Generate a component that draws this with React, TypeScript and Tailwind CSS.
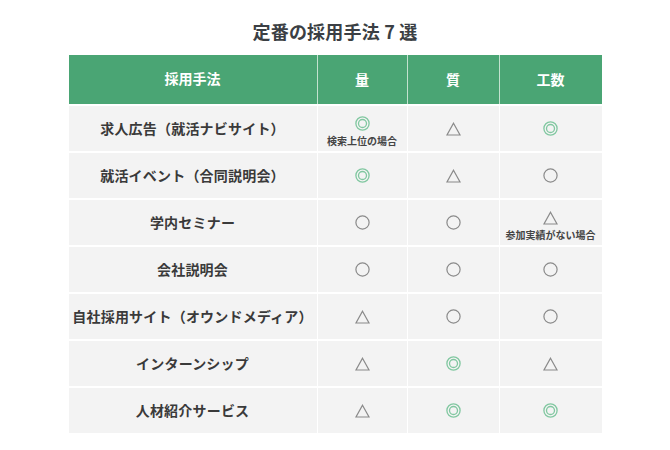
import React from "react";

type Mark = "double" | "circle" | "tri";
type Cell = { m: Mark; note?: string };
const rows: { name: string; cells: Cell[] }[] = [
  { name: "求人広告（就活ナビサイト）", cells: [{ m: "double", note: "検索上位の場合" }, { m: "tri" }, { m: "double" }] },
  { name: "就活イベント（合同説明会）", cells: [{ m: "double" }, { m: "tri" }, { m: "circle" }] },
  { name: "学内セミナー", cells: [{ m: "circle" }, { m: "circle" }, { m: "tri", note: "参加実績がない場合" }] },
  { name: "会社説明会", cells: [{ m: "circle" }, { m: "circle" }, { m: "circle" }] },
  { name: "自社採用サイト（オウンドメディア）", cells: [{ m: "tri" }, { m: "circle" }, { m: "circle" }] },
  { name: "インターンシップ", cells: [{ m: "tri" }, { m: "double" }, { m: "tri" }] },
  { name: "人材紹介サービス", cells: [{ m: "tri" }, { m: "double" }, { m: "double" }] },
];

const widths = ["w-[89px]", "w-[91px]", "w-[102px]"];

function Symbol({ m }: { m: Mark }) {
  if (m === "double")
    return (
      <svg width="15" height="15" viewBox="0 0 15 15" fill="none" stroke="#80c7a0" strokeWidth="1.3">
        <circle cx="7.5" cy="7.5" r="6.6" />
        <circle cx="7.5" cy="7.5" r="4" />
      </svg>
    );
  if (m === "circle")
    return (
      <svg width="15" height="15" viewBox="0 0 15 15" fill="none" stroke="#8a8a8a" strokeWidth="1.2">
        <circle cx="7.5" cy="7.5" r="6.6" />
      </svg>
    );
  return (
    <svg width="15" height="14" viewBox="0 0 15 14" fill="none" stroke="#8a8a8a" strokeWidth="1.2" strokeLinejoin="miter">
      <path d="M7.5 1.2 L14 13 L1 13 Z" />
    </svg>
  );
}

function MarkCell({ c, w }: { c: Cell; w: string }) {
  return (
    <div
      className={`${w} bg-[#f3f3f3] flex flex-col items-center justify-center ${c.note ? "pt-[6px]" : ""}`}
    >
      <Symbol m={c.m} />
      {c.note && (
        <span className="text-[10px] leading-[12px] font-bold text-[#444] mt-[4px] whitespace-nowrap">{c.note}</span>
      )}
    </div>
  );
}

export default function App() {
  return (
    <div
      className="w-[670px] h-[450px] bg-white"
      style={{ fontFamily: '"Noto Sans CJK JP", "Noto Sans", sans-serif' }}
    >
      <div className="pt-[17px] h-[55px] text-center">
        <h1 className="text-[18px] leading-[28px] font-bold text-[#3b3f44] tracking-[0.2px]">定番の採用手法 7 選</h1>
      </div>
      <div className="w-[533px] mx-auto flex flex-col gap-[2px] bg-white">
        <div className="flex h-[49px] bg-[#c3e2cf] gap-px">
          <div className="w-[248px] bg-[#4aa574] flex items-center justify-center text-white text-[14px] font-bold pb-[2px]">
            採用手法
          </div>
          {["量", "質", "工数"].map((h, i) => (
            <div
              key={h}
              className={`${widths[i]} bg-[#4aa574] flex items-center justify-center text-white text-[14px] font-bold`}
            >
              {h}
            </div>
          ))}
        </div>
        {rows.map((r) => (
          <div key={r.name} className="flex h-[45px] gap-px">
            <div className="w-[248px] bg-[#f3f3f3] flex items-center justify-center text-[14px] font-bold text-[#3a3a3a] tracking-[0.2px]">
              {r.name}
            </div>
            {r.cells.map((c, i) => (
              <MarkCell key={i} c={c} w={widths[i]} />
            ))}
          </div>
        ))}
      </div>
    </div>
  );
}
